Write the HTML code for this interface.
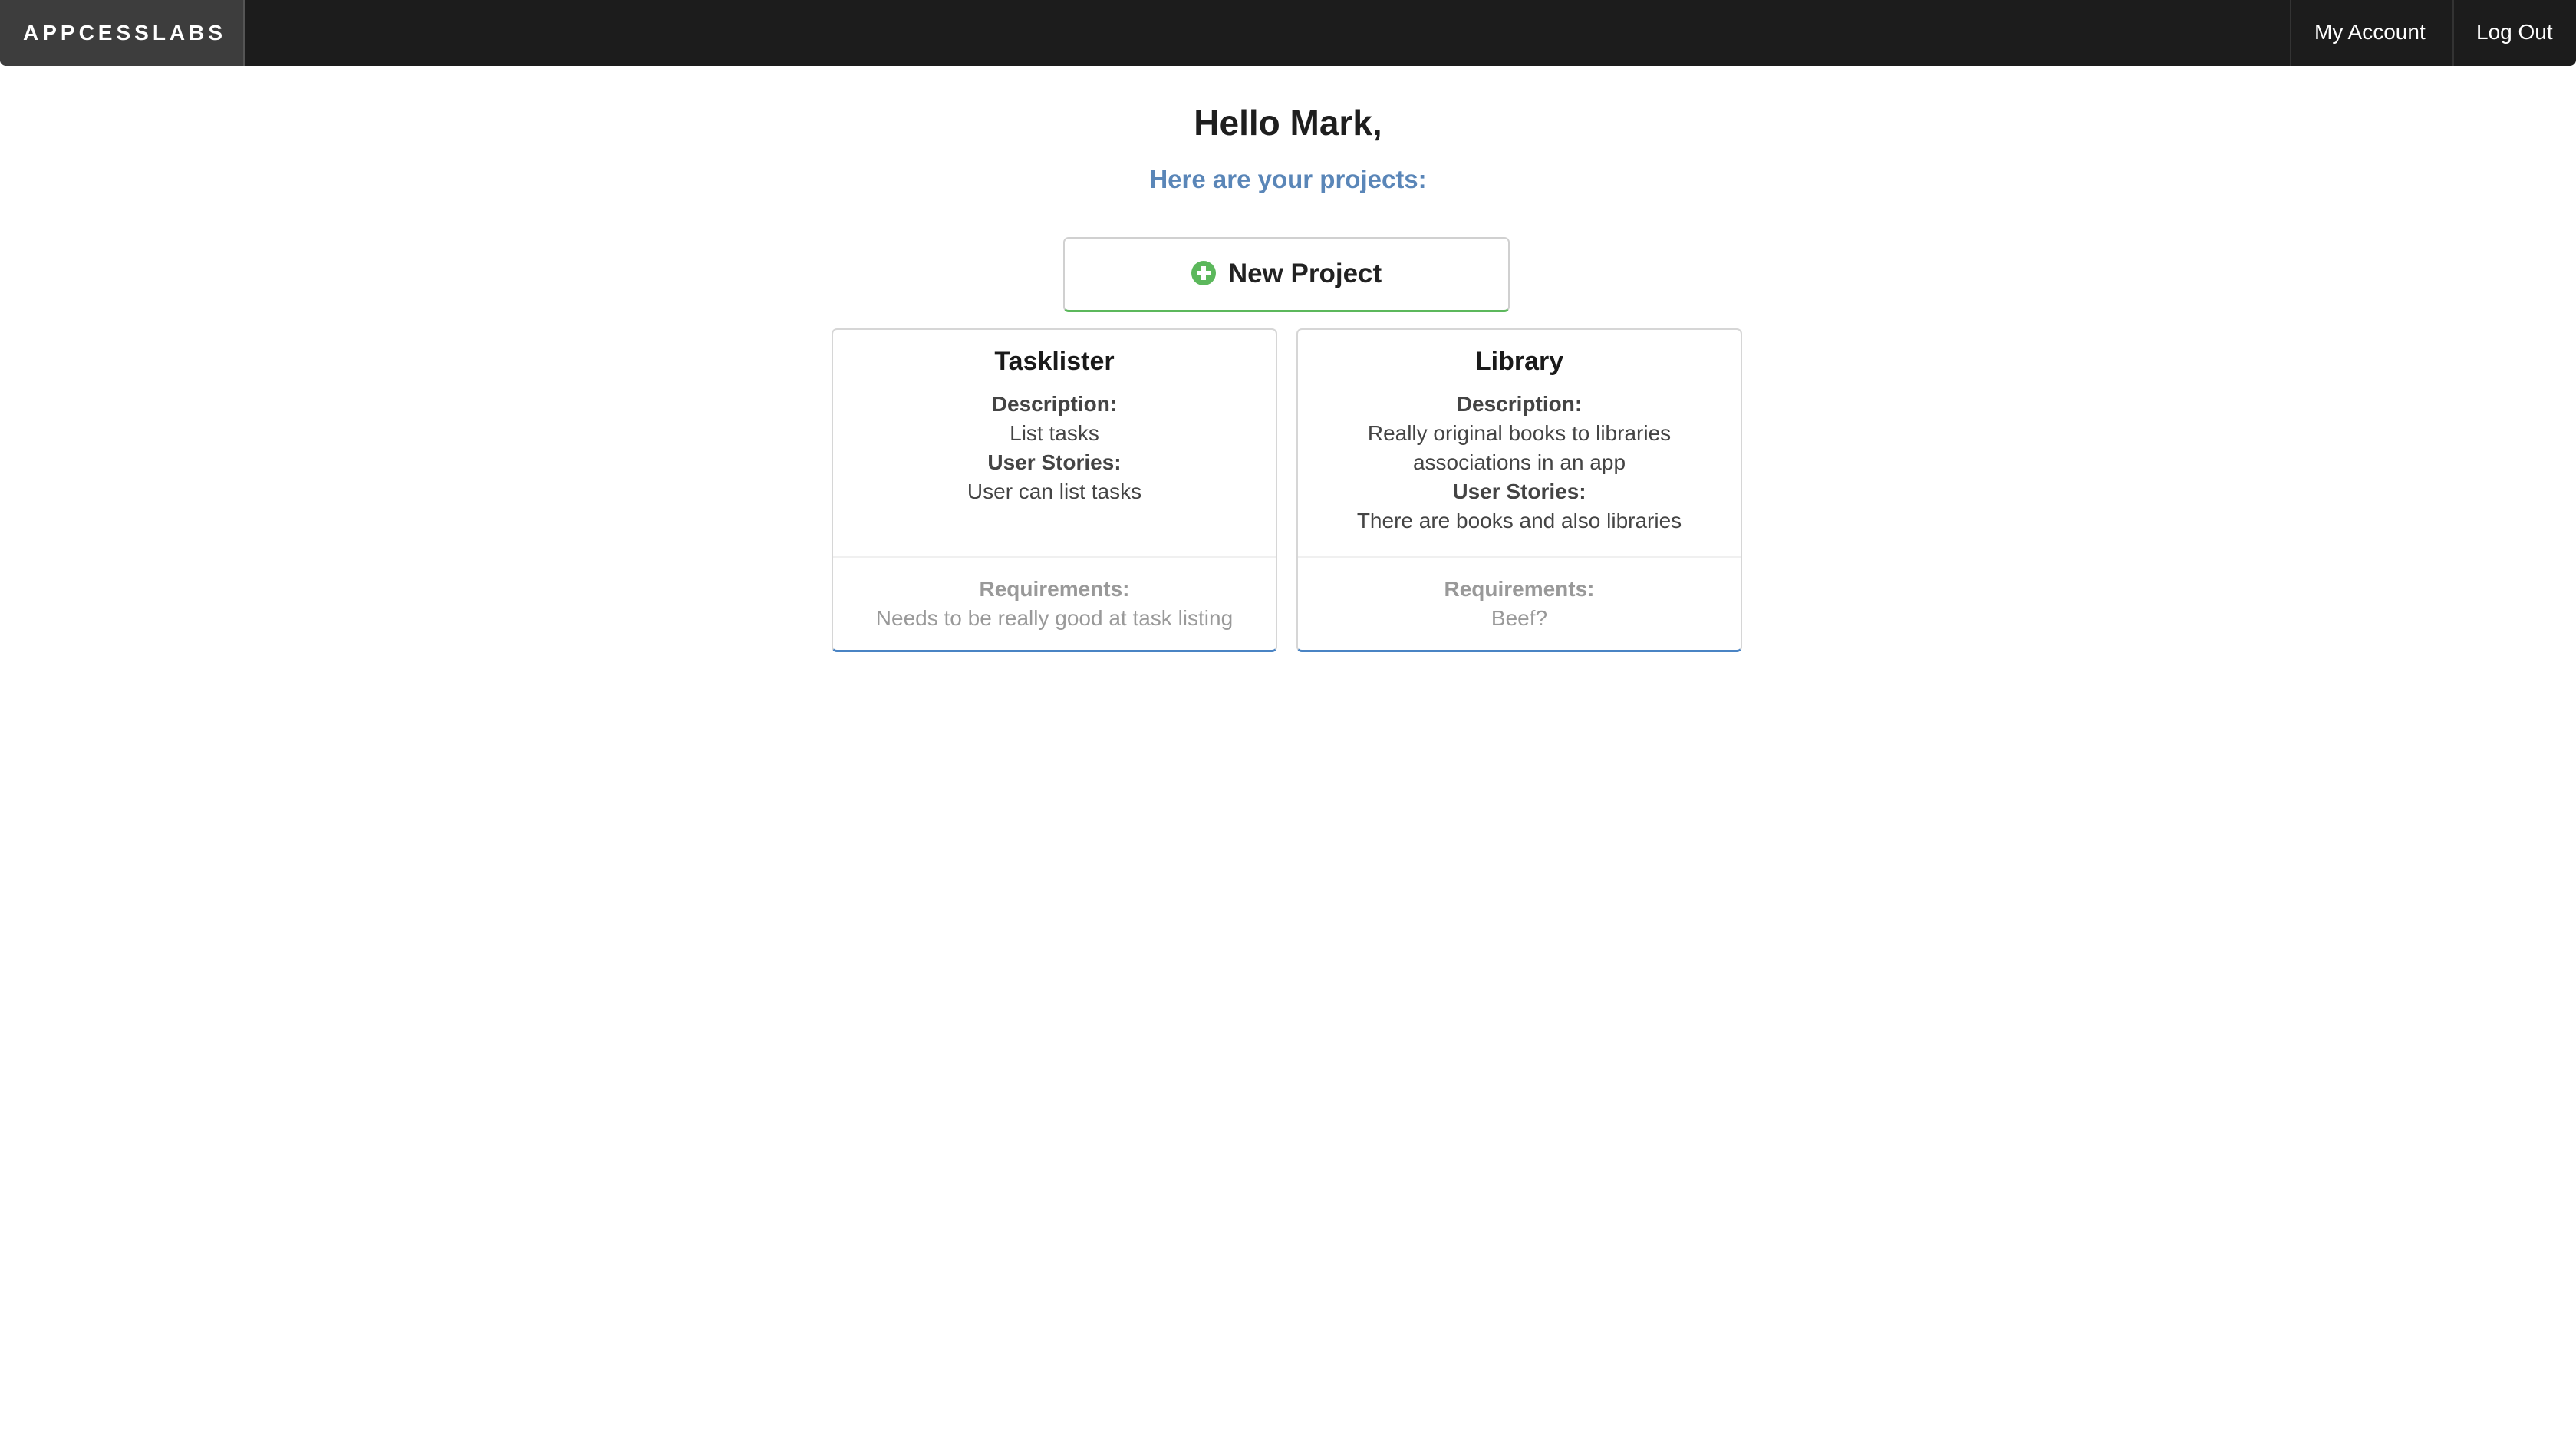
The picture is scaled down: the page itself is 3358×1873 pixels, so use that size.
<!DOCTYPE html>
<html><head><meta charset="utf-8"><style>
*{box-sizing:border-box;margin:0;padding:0}
body{width:3358px;height:1873px;background:#fff;font-family:"Liberation Sans",sans-serif;position:relative;overflow:hidden}
.nav{position:absolute;left:0;top:0;width:3358px;height:86px;background:#1c1c1c;border-radius:0 0 8px 8px}
.logo{position:absolute;left:0;top:0;width:319px;height:86px;background:#3d3d3d;border-radius:0 0 0 8px;border-right:2px solid #555;color:#fff;font-weight:bold;font-size:28px;letter-spacing:5px;line-height:86px;padding-left:30px}
.div{position:absolute;top:0;width:2px;height:86px;background:#333}
.nl{position:absolute;top:0;line-height:84px;color:#fff;font-size:28px}
.c{position:absolute;left:0;width:3358px;text-align:center;font-weight:bold}
.btn{position:absolute;left:1386px;top:309px;width:582px;height:98px;border:2px solid #d0d0d0;border-bottom:3px solid #5cb85c;border-radius:7px;text-align:center;line-height:92px;font-size:35px;font-weight:bold;color:#222}
.plus{display:inline-block;width:32px;height:32px;border-radius:50%;background:#5cb85c;position:relative;vertical-align:-4px;margin-right:16px}
.plus:before{content:"";position:absolute;left:13px;top:7px;width:6px;height:18px;background:#fff}
.plus:after{content:"";position:absolute;left:7px;top:13px;width:18px;height:6px;background:#fff}
.card{position:absolute;top:428px;width:581px;height:422px;border:2px solid #d6d6d6;border-bottom:3px solid #4a84c4;border-radius:7px;text-align:center}
.top{height:297px;border-bottom:2px solid #f0f0f0;padding-top:16px}
.t{font-size:34px;font-weight:bold;line-height:50px;color:#1a1a1a;margin-bottom:12px}
.l{font-size:28px;line-height:38px;color:#444}
.b{font-weight:bold}
.foot{padding-top:22px}
.foot .l{color:#999}
</style></head><body>
<div class="nav"><div class="logo">APPCESSLABS</div>
<div class="div" style="left:2985px"></div><div class="div" style="left:3197px"></div>
<div class="nl" style="left:3017px">My Account</div><div class="nl" style="left:3228px">Log Out</div></div>
<div class="c" style="top:130px;font-size:46px;line-height:60px;color:#1e1e1e">Hello Mark,</div>
<div class="c" style="top:211px;font-size:33px;line-height:46px;color:#5a86b8">Here are your projects:</div>
<div class="btn"><span class="plus"></span>New Project</div>
<div class="card" style="left:1084px"><div class="top"><div class="t">Tasklister</div>
<div class="l b">Description:</div><div class="l">List tasks</div><div class="l b">User Stories:</div><div class="l">User can list tasks</div></div>
<div class="foot"><div class="l b">Requirements:</div><div class="l">Needs to be really good at task listing</div></div></div>
<div class="card" style="left:1690px"><div class="top"><div class="t">Library</div>
<div class="l b">Description:</div><div class="l">Really original books to libraries<br>associations in an app</div><div class="l b">User Stories:</div><div class="l">There are books and also libraries</div></div>
<div class="foot"><div class="l b">Requirements:</div><div class="l">Beef?</div></div></div>
</body></html>
